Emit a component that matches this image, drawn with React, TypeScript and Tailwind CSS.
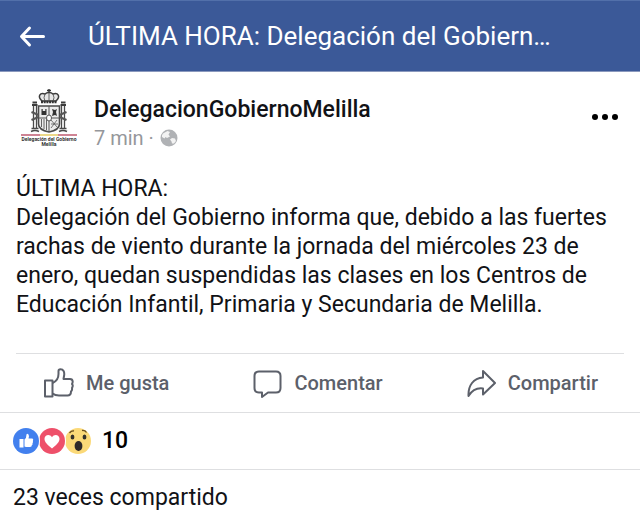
function BackIcon() {
  return (
    <svg viewBox="0 0 28 24" className="h-6 w-7" fill="none" stroke="#fff" strokeWidth="3" strokeLinecap="round" strokeLinejoin="round" aria-hidden="true">
      <path d="M25.500 12.500H4M11.500 4L3.500 12.500L11.500 21" />
    </svg>
  );
}

function Crest() {
  return (
    <svg viewBox="0 0 56 46" className="h-[46px] w-14" fill="none" stroke="#555" aria-hidden="true">
      {/* crown */}
      <path d="M28 1v4M26 2.500h4" stroke="#333" strokeWidth="1.400" />
      <path d="M21 13C16 8 19 4.500 24 6c2-2 6-2 8 0c5-1.500 8 2 3 7z" fill="#e6e6e6" stroke="#3c3c3c" strokeWidth="1.500" />
      <path d="M28 5v8M24 6q-2 4 0 7M32 6q2 4 0 7" strokeWidth="0.900" />
      <path d="M20 14h16" stroke="#333" strokeWidth="2.400" strokeDasharray="2 0.700" />
      {/* shield */}
      <path d="M17.500 18h21v18q0 6-10.500 8q-10.500-2-10.500-8z" fill="#ececec" stroke="#4a4a4a" strokeWidth="1.600" />
      <path d="M28 18v25M18 30h20" strokeWidth="1" />
      <path d="M20.500 27v-6h1.200v2h2.600v-2h1.200v6z" fill="#333" stroke="none" />
      <path d="M31 28l1-4-1-3 3 1 2-1-1 3 1 4-2-1z" fill="#333" stroke="none" />
      <path d="M20.500 31v8M23 31v10M25.500 31v11" strokeWidth="0.900" />
      <path d="M30 32l6 7M36 32l-6 8M30 36h7" strokeWidth="0.800" />
      <ellipse cx="28" cy="30" rx="2.500" ry="3" fill="#fff" strokeWidth="1" />
      {/* pillars */}
      <path d="M11 17h5.500M11.500 14.500h4.500M39.500 17h5.500M40 14.500h4.500" stroke="#3c3c3c" strokeWidth="2" />
      <path d="M12.500 18v22M15.500 18v22M40.500 18v22M43.500 18v22" stroke="#4a4a4a" strokeWidth="1.300" />
      <path d="M10.500 24l7 3M10.500 32l7-3M38.500 27l7-3M38.500 29l7 3" stroke="#555" strokeWidth="2.200" />
      <path d="M10.500 40.500h7M38.500 40.500h7M10 43.500q4-2 8 0M38 43.500q4-2 8 0" stroke="#4a4a4a" strokeWidth="1.700" />
    </svg>
  );
}

function GlobeIcon() {
  return (
    <svg viewBox="0 0 18 18" className="size-[18px]" aria-hidden="true">
      <circle cx="9" cy="9" r="8.500" fill="#b0b2b5" />
      <path d="M3 4.500L7.500 2L10 3L8.500 5.500L10 7.500L7 9L5.500 8L4.500 9.500L2 8Q1.500 6 3 4.500z" fill="#f3f3f3" />
      <path d="M10 10.500L12 9L15 9.500L16 12L14 14.500L12 14.500L11.500 12.500z" fill="#f3f3f3" />
    </svg>
  );
}

function LikeIcon() {
  return (
    <svg viewBox="0 0 30 30" className="size-[30px]" fill="none" stroke="#5c606a" strokeWidth="2" strokeLinejoin="round" aria-hidden="true">
      <path d="M1 12.500h7.500v16H1z" />
      <path d="M8.500 15C12 13.500 14.500 10 14.500 6V3Q14.500 1.200 16.500 1.200C19.500 1.200 20.500 4 20.200 7L19.500 11H26Q28.500 11 28.700 13.500Q28.700 15 28 16Q29.500 17.500 28 20Q28.500 22 27 23.500Q27 27.500 23.500 27.500H15Q11 27.500 8.500 25.500" />
    </svg>
  );
}

function CommentIcon() {
  return (
    <svg viewBox="0 0 30 30" className="size-[30px]" fill="none" stroke="#5c606a" strokeWidth="2" strokeLinejoin="round" aria-hidden="true">
      <path d="M7 3.500H24Q28.500 3.500 28.500 8V20Q28.500 24.500 24 24.500H16L10 29V24.500H7Q2.500 24.500 2.500 20V8Q2.500 3.500 7 3.500z" />
    </svg>
  );
}

function ShareIcon() {
  return (
    <svg viewBox="0 0 30 30" className="size-[30px]" fill="none" stroke="#5c606a" strokeWidth="2" strokeLinejoin="round" aria-hidden="true">
      <path d="M17 3L29 15L17 26.500V20.500C10 19.500 6 22.500 2.500 28C2 17.500 7.500 10 17 9.500z" />
    </svg>
  );
}

function Reactions() {
  return (
    <svg viewBox="0 0 80 28" className="h-7 w-20" role="img" aria-label="Me gusta, Me encanta, Me asombra">
      <circle cx="66" cy="14" r="13" fill="#fbd978" />
      <path d="M57.500 6q2-2.500 4.500-2M70 3.500q3-.500 4.500 2" stroke="#6b5020" strokeWidth="1.300" fill="none" />
      <ellipse cx="60.500" cy="10" rx="1.900" ry="2.600" fill="#33302c" />
      <ellipse cx="72.500" cy="10" rx="1.900" ry="2.600" fill="#33302c" />
      <ellipse cx="66.500" cy="19" rx="3.900" ry="5" fill="#2e2929" />
      <circle cx="40" cy="14" r="14" fill="#fff" />
      <circle cx="40" cy="14" r="13" fill="#ee506a" />
      <path d="M40 21.500C35 17.500 32.500 15 32.500 11.800C32.500 7.500 38 6.500 40 10.200C42 6.500 47.500 7.500 47.500 11.800C47.500 15 45 17.500 40 21.500z" fill="#fff" />
      <circle cx="14" cy="14" r="14" fill="#fff" />
      <circle cx="14" cy="14" r="13" fill="#4280ee" />
      <path d="M7.500 12h4v8.500h-4zM12.500 12.500Q14.500 11 14.500 7.500Q15 6 16.500 7.500Q17.500 9 16.500 11.500H20Q22 12 20.800 14Q21.500 15 20.500 16.200Q21 17.500 19.800 18.300Q20 20 18 20H14L12.500 19.500z" fill="#fff" />
    </svg>
  );
}

const actions = [
  { label: "Me gusta", Icon: LikeIcon },
  { label: "Comentar", Icon: CommentIcon },
  { label: "Compartir", Icon: ShareIcon },
];

export default function App() {
  return (
    <div className="min-h-screen bg-white font-['Roboto',sans-serif] text-[#111216]">
      <header className="flex h-[72px] items-center gap-[42px] border-t border-b border-t-[#5270aa] border-b-[#8a99bd] bg-[#3b5998] pl-[18px]">
        <button type="button" aria-label="Volver">
          <BackIcon />
        </button>
        <h1 className="text-[26px] leading-8 text-white">ÚLTIMA HORA: Delegación del Gobiern…</h1>
      </header>

      <main>
        <article>
          <div className="flex items-start px-4 pt-4">
            <div className="flex w-[66px] shrink-0 flex-col items-center text-center">
              <Crest />
              <div className="flex h-[2px] w-14">
                <span className="flex-1 bg-[#cf8494]" />
                <span className="flex-1 bg-[#ecd98a]" />
                <span className="flex-1 bg-[#cf8494]" />
              </div>
              <p className="pt-px text-[5px] leading-[5px] font-bold whitespace-nowrap text-[#333]">
                Delegación del Gobierno
                <br />
                Melilla
              </p>
            </div>
            <div className="min-w-0 flex-1 pl-3">
              <h2 className="pt-2 text-[23px] leading-7 font-medium">DelegacionGobiernoMelilla</h2>
              <p className="flex items-center gap-[6px] text-[20px] leading-7 text-[#95979b]">
                <span>7 min ·</span>
                <GlobeIcon />
              </p>
            </div>
            <button type="button" aria-label="Más opciones" className="flex gap-1 pt-[26px] pr-[6px]">
              <span className="size-[6px] rounded-full bg-black" />
              <span className="size-[6px] rounded-full bg-black" />
              <span className="size-[6px] rounded-full bg-black" />
            </button>
          </div>

          <div className="px-4 pt-[22px] pb-[34px] text-[23px] leading-[29px]">
            <p>ÚLTIMA HORA:</p>
            <p>
              Delegación del Gobierno informa que, debido a las fuertes rachas de viento durante la jornada del miércoles 23 de enero, quedan suspendidas las clases en los Centros de Educación Infantil, Primaria y Secundaria de Melilla.
            </p>
          </div>

          <div className="mx-4 flex h-[59px] items-center justify-between border-t border-[#dedfe1] pr-[26px] pl-7">
            {actions.map(({ label, Icon }) => (
              <button key={label} type="button" className="flex items-center gap-3 text-[20px] leading-6 font-medium text-[#5c606a]">
                <Icon />
                {label}
              </button>
            ))}
          </div>
        </article>

        <div className="flex h-[57px] items-center gap-[10px] border-t border-[#dedfe1] pl-3">
          <Reactions />
          <span className="text-[23px] leading-7 font-medium text-black">10</span>
        </div>
        <p className="border-t border-[#dedfe1] px-[13px] pt-[14px] text-[23px] leading-7">23 veces compartido</p>
      </main>
    </div>
  );
}
